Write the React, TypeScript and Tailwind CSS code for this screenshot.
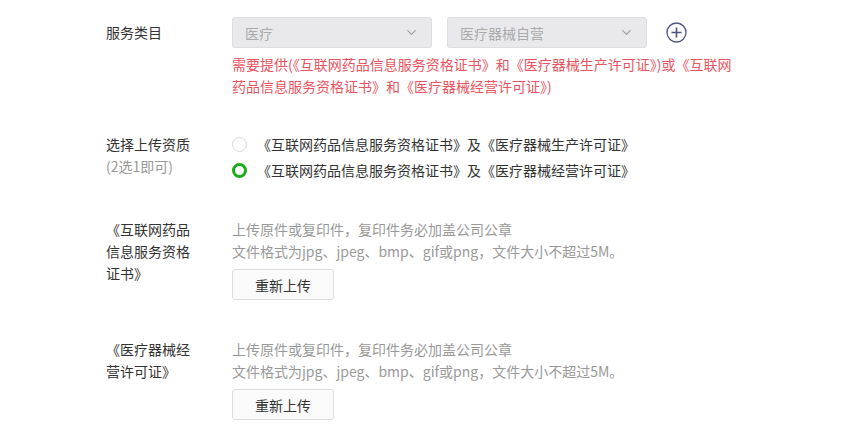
import React from 'react';
import { ChevronDown } from 'lucide-react';

const font = { fontFamily: '"Noto Sans CJK SC", "Noto Sans", sans-serif' };

const Select = ({ value }: { value: string }) => (
  <div className="w-[200px] h-[31px] flex items-center justify-between pl-3 pr-3 bg-[#e9e9ed] border border-[#dcdce1] rounded-[3px] text-[#aaaaaa]">
    <span>{value}</span>
    <ChevronDown size={15} className="text-[#9a9a9a]" strokeWidth={1.8} />
  </div>
);

const Radio = ({ checked, label }: { checked?: boolean; label: string }) => (
  <div className="flex items-center h-[22px] text-[#333333]">
    {checked ? (
      <span className="w-[15px] h-[15px] rounded-full border-[3px] border-[#1aad19] bg-white box-border" />
    ) : (
      <span className="w-[15px] h-[15px] rounded-full border border-[#d9d9d9] bg-white box-border" />
    )}
    <span className="ml-[10px]">{label}</span>
  </div>
);

const UploadBlock = () => (
  <div className="flex flex-col">
    <p className="leading-[22px] text-[#999999]">上传原件或复印件，复印件务必加盖公司公章</p>
    <p className="leading-[22px] text-[#999999]">文件格式为jpg、jpeg、bmp、gif或png，文件大小不超过5M。</p>
    <button className="mt-[7px] w-[102px] h-[31px] bg-[#fafafa] border border-[#dddddd] rounded-[3px] text-[#333333] text-sm">
      重新上传
    </button>
  </div>
);

export default function App() {
  return (
    <div className="w-[842px] h-[441px] bg-white text-sm pl-[106px] pt-[17px] overflow-hidden" style={font}>
      {/* 服务类目 */}
      <div className="flex">
        <div className="w-[126px] shrink-0 leading-[31px] text-[#333333]">服务类目</div>
        <div className="flex flex-col">
          <div className="flex items-center gap-[15px]">
            <Select value="医疗" />
            <Select value="医疗器械自营" />
            <svg width="21" height="21" viewBox="0 0 21 21" className="ml-[4px]">
              <circle cx="10.5" cy="10.5" r="9.5" fill="none" stroke="#4a5584" strokeWidth="1.3" />
              <path d="M10.5 5.5v10M5.5 10.5h10" stroke="#4a5584" strokeWidth="1.6" />
            </svg>
          </div>
          <p className="mt-[5px] w-[502px] leading-[22px] text-[#ea5460]">
            需要提供(《互联网药品信息服务资格证书》和《医疗器械生产许可证》)或《互联网药品信息服务资格证书》和《医疗器械经营许可证》)
          </p>
        </div>
      </div>

      {/* 选择上传资质 */}
      <div className="flex mt-[36px]">
        <div className="w-[126px] shrink-0 leading-[22px]">
          <p className="text-[#333333]">选择上传资质</p>
          <p className="text-[#999999]">(2选1即可)</p>
        </div>
        <div className="flex flex-col gap-[4px]">
          <Radio label="《互联网药品信息服务资格证书》及《医疗器械生产许可证》" />
          <Radio checked label="《互联网药品信息服务资格证书》及《医疗器械经营许可证》" />
        </div>
      </div>

      {/* 证书1 */}
      <div className="flex mt-[37px]">
        <div className="w-[126px] shrink-0 leading-[22px] text-[#333333]">
          <p className="w-[86px]">《互联网药品信息服务资格证书》</p>
        </div>
        <UploadBlock />
      </div>

      {/* 证书2 */}
      <div className="flex mt-[38px]">
        <div className="w-[126px] shrink-0 leading-[22px] text-[#333333]">
          <p className="w-[86px]">《医疗器械经营许可证》</p>
        </div>
        <UploadBlock />
      </div>
    </div>
  );
}
